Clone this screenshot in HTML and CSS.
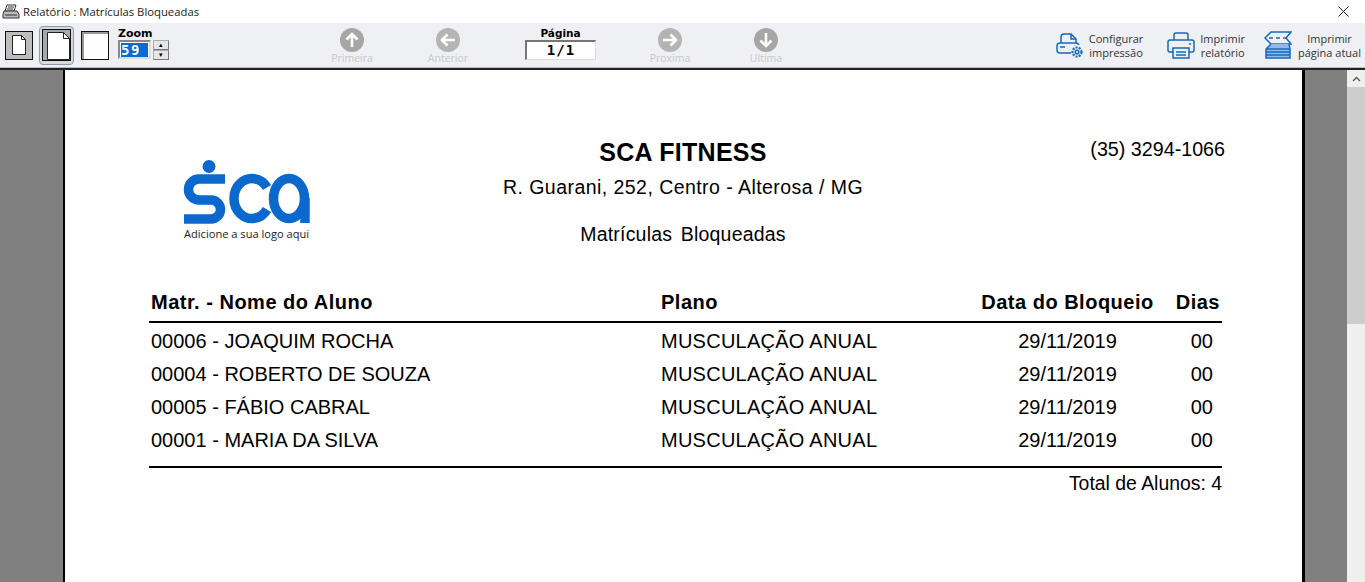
FILE: index.html
```html
<!DOCTYPE html>
<html lang="pt-BR">
<head>
    <meta charset="UTF-8">
    <title>Relatório : Matrículas Bloqueadas</title>
    <link rel="stylesheet" href="styles.css">
</head>
<body>
<div class="window">
    <div class="titlebar">
        <svg class="title-icon" width="18" height="16" viewBox="0 0 18 16">
            <path d="M5 1h9l-2 6H3z" fill="#fff" stroke="#333"/>
            <path d="M2 7h13l2 3v4H1v-4z" fill="#bbb" stroke="#333"/>
            <path d="M6 3h6M5 5h6M3 11h12" stroke="#333" fill="none"/>
        </svg>
        <span class="title-text">Relatório : Matrículas Bloqueadas</span>
        <svg class="close" width="11" height="11" viewBox="0 0 11 11"><path d="M.5.5l10 10M10.5.5l-10 10" stroke="#222" fill="none"/></svg>
    </div>

    <div class="toolbar">
        <div class="views">
            <div class="view view-down">
                <svg width="14" height="20" viewBox="0 0 14 20"><path d="M.5.5h9l4 4v15H.5z" fill="#fff" stroke="#222"/><path d="M9.5.5v4h4" fill="none" stroke="#222"/></svg>
            </div>
            <div class="view-wrap">
                <div class="view view-page">
                    <svg width="23" height="28" viewBox="0 0 23 28"><path d="M.5.5h16l6 6v21H.5z" fill="#fff" stroke="#222"/><path d="M16.5.5v6h6" fill="none" stroke="#222"/></svg>
                </div>
            </div>
            <div class="view view-blank"></div>
        </div>
        <div class="zoom">
            <div class="zoom-label">Zoom</div>
            <div class="zoom-row">
                <div class="zoom-input"><span class="zoom-value">59</span></div>
                <div class="spin">
                    <div class="spin-btn">▴</div>
                    <div class="spin-btn">▾</div>
                </div>
            </div>
        </div>

        <div class="nav">
            <div class="nav-btn first">
                <svg width="26" height="26" viewBox="0 0 26 26"><circle cx="13" cy="13" r="12" fill="#a6a6a6"/><path d="M13 20V7M7.500 12.500L13 7l5.500 5.500" stroke="#fff" stroke-width="2.600" fill="none"/></svg>
                <span>Primeira</span>
            </div>
            <div class="nav-btn prev">
                <svg width="26" height="26" viewBox="0 0 26 26"><circle cx="13" cy="13" r="12" fill="#b4b4b4"/><path d="M20 13H7M12.500 7.500L7 13l5.500 5.500" stroke="#fff" stroke-width="2.600" fill="none"/></svg>
                <span>Anterior</span>
            </div>
            <div class="page-box">
                <div class="page-label">Página</div>
                <div class="page-input">1/1</div>
            </div>
            <div class="nav-btn next">
                <svg width="26" height="26" viewBox="0 0 26 26"><circle cx="13" cy="13" r="12" fill="#b4b4b4"/><path d="M6 13h13M13.500 7.500L19 13l-5.500 5.500" stroke="#fff" stroke-width="2.600" fill="none"/></svg>
                <span>Proxima</span>
            </div>
            <div class="nav-btn last">
                <svg width="26" height="26" viewBox="0 0 26 26"><circle cx="13" cy="13" r="12" fill="#a6a6a6"/><path d="M13 6v13M7.500 13.500L13 19l5.500-5.500" stroke="#fff" stroke-width="2.600" fill="none"/></svg>
                <span>Ultima</span>
            </div>
        </div>

        <div class="actions">
            <div class="action action-config">
                <svg width="27" height="27" viewBox="0 0 27 27" fill="none" stroke="#1668bd" stroke-width="1.500">
                    <path d="M5 11V5q0-3 3-3h7l5 5v4"/>
                    <path d="M15 2v5h5"/>
                    <path d="M15 21H4q-3 0-3-3v-4q0-3 3-3h16q2 0 3 2"/>
                    <path d="M4 15h5"/>
                    <circle cx="21" cy="20" r="1.800"/>
                    <circle cx="21" cy="20" r="4.500" stroke-dasharray="2 1.200" stroke-width="2.200"/>
                </svg>
                <div class="action-text">Configurar<br>impressão</div>
            </div>
            <div class="action action-print">
                <svg width="28" height="27" viewBox="0 0 28 27" fill="none" stroke="#1668bd" stroke-width="1.500">
                    <path d="M7 8V3q0-2 2-2h10q2 0 2 2v5"/>
                    <path d="M6 20H3q-2 0-2-2v-8q0-2 2-2h22q2 0 2 2v8q0 2-2 2h-3"/>
                    <path d="M6 16h16v10H6z"/>
                    <path d="M9 20h10M9 23h10"/>
                    <path d="M22 12h2"/>
                </svg>
                <div class="action-text">Imprimir<br>relatório</div>
            </div>
            <div class="action action-current">
                <svg width="28" height="28" viewBox="0 0 28 28" fill="none" stroke="#1668bd" stroke-width="1.500">
                    <path d="M7 1h20l-5 6 5 6H7L1 7z"/>
                    <path d="M5 7h4M12 7h4M19 7h3"/>
                    <path d="M7 13l-5 5v9h24v-9l-1-5" fill="#8fbde9"/>
                    <path d="M2 18h24M2 21h24M2 24h24" stroke-width="1.700"/>
                </svg>
                <div class="action-text">Imprimir<br>página atual</div>
            </div>
        </div>
    </div>

    <div class="workspace">
        <div class="sheet">
            <div class="report-head">
                <div class="logo">
                    <svg class="logo-mark" width="128" height="66" viewBox="0 0 128 66" fill="none" stroke="#0b68cc" stroke-width="9.500">
                        <circle cx="26" cy="6.500" r="6.500" fill="#0b68cc" stroke="none"/>
                        <path d="M42 19H16a10.500 10.500 0 0 0 0 21H28a9.500 9.500 0 0 1 0 19H1"/>
                        <path d="M84 27.500A18 20 0 1 0 84 49.500"/>
                        <ellipse cx="106" cy="38.500" rx="15.500" ry="20"/>
                        <path d="M122 38v25"/>
                    </svg>
                    <div class="logo-caption">Adicione a sua logo aqui</div>
                </div>
                <div class="company">
                    <div class="company-name">SCA FITNESS</div>
                    <div class="company-addr">R. Guarani, 252, Centro - Alterosa / MG</div>
                    <div class="report-title">Matrículas Bloqueadas</div>
                </div>
                <div class="phone">(35) 3294-1066</div>
            </div>

            <div class="table">
                <div class="row head-row">
                    <div class="col-name">Matr. - Nome do Aluno</div>
                    <div class="col-plan">Plano</div>
                    <div class="col-date">Data do Bloqueio</div>
                    <div class="col-days">Dias</div>
                </div>
                <div class="rows">
                    <div class="row">
                        <div class="col-name">00006 - JOAQUIM ROCHA</div>
                        <div class="col-plan">MUSCULAÇÃO ANUAL</div>
                        <div class="col-date">29/11/2019</div>
                        <div class="col-days">00</div>
                    </div>
                    <div class="row">
                        <div class="col-name">00004 - ROBERTO DE SOUZA</div>
                        <div class="col-plan">MUSCULAÇÃO ANUAL</div>
                        <div class="col-date">29/11/2019</div>
                        <div class="col-days">00</div>
                    </div>
                    <div class="row">
                        <div class="col-name">00005 - FÁBIO CABRAL</div>
                        <div class="col-plan">MUSCULAÇÃO ANUAL</div>
                        <div class="col-date">29/11/2019</div>
                        <div class="col-days">00</div>
                    </div>
                    <div class="row">
                        <div class="col-name">00001 - MARIA DA SILVA</div>
                        <div class="col-plan">MUSCULAÇÃO ANUAL</div>
                        <div class="col-date">29/11/2019</div>
                        <div class="col-days">00</div>
                    </div>
                </div>
                <div class="total">Total de Alunos: 4</div>
            </div>
        </div>
        <div class="scrollbar">
            <div class="scroll-arrow">
                <svg width="9" height="6" viewBox="0 0 9 6"><path d="M1 5l3.500-3.500L8 5" fill="none" stroke="#555" stroke-width="1.300"/></svg>
            </div>
            <div class="scroll-thumb"></div>
        </div>
    </div>
</div>
</body>
</html>
```

FILE: styles.css
```css
*{
    margin: 0;
    padding: 0;
    box-sizing: border-box;
}
html, body{
    height: 100%;
    overflow: hidden;
}
body{
    font-family: "Liberation Sans", Arial, sans-serif;
    background: #fff;
    color: #000;
}
.window{
    height: 582px;
    display: flex;
    flex-direction: column;
}

/* title bar */
.titlebar{
    height: 23px;
    display: flex;
    align-items: center;
    padding: 0 16px 0 2px;
    background: #fff;
}
.title-icon{
    margin-right: 3px;
}
.title-text{
    font-family: "Open Sans", sans-serif;
    font-size: 11.3px;
    color: #222;
    flex: 1;
}

/* toolbar */
.toolbar{
    height: 45px;
    background: #eef0f3;
    display: flex;
    border-bottom: 1px solid #b9bcc0;
}
.views{
    display: flex;
    align-items: center;
    padding-left: 5px;
}
.view{
    border: 1px solid #111;
    width: 28px;
    height: 29px;
    display: flex;
    align-items: center;
    justify-content: center;
}
.view-down{
    background: #bdbdbd;
}
.view-wrap{
    margin-left: 6px;
    width: 35px;
    height: 39px;
    border: 1px solid #8f9aa6;
    border-radius: 4px;
    background: #d5dae0;
    display: flex;
    align-items: center;
    justify-content: center;
}
.view-page{
    width: 29px;
    height: 32px;
    background: #a8a8a8;
    align-items: flex-end;
    justify-content: flex-end;
}
.view-page svg{
    display: block;
}
.view-blank{
    margin-left: 7px;
    background: #fff;
    box-shadow: inset 2px 2px 0 #999;
}
.zoom{
    margin-left: 9px;
    padding-top: 5px;
}
.zoom-label{
    font-family: "DejaVu Sans", sans-serif;
    font-size: 11px;
    font-weight: bold;
    line-height: 12px;
    text-align: center;
    width: 32px;
}
.zoom-row{
    display: flex;
    gap: 1px;
}
.zoom-input{
    width: 33px;
    height: 19px;
    background: #fff;
    border: 2px solid #888;
    border-right-color: #ddd;
    border-bottom-color: #ddd;
    padding: 1px 0 0 1px;
}
.zoom-value{
    display: block;
    width: 27px;
    height: 14px;
    background: #0a6ad6;
    color: #fff;
    font-family: "DejaVu Sans Mono", monospace;
    font-size: 14px;
    font-weight: bold;
    line-height: 14px;
    letter-spacing: 1.500px;
}
.spin{
    display: flex;
    flex-direction: column;
    margin-left: 1px;
}
.spin-btn{
    width: 16px;
    height: 10px;
    background: #e6e6e6;
    border: 1px solid #aaa;
    border-right-color: #777;
    border-bottom-color: #777;
    font-size: 7px;
    line-height: 8px;
    text-align: center;
}

/* page navigation */
.nav{
    flex: 1;
    display: flex;
    margin-left: 153px;
}
.nav-btn{
    width: 60px;
    display: flex;
    flex-direction: column;
    align-items: center;
    padding-top: 4px;
}
.nav-btn span{
    font-family: "Open Sans", sans-serif;
    font-size: 10.5px;
    line-height: 14px;
    color: #c8c8c8;
    margin-top: -2px;
}
.prev{
    margin-left: 36px;
}
.page-box{
    margin-left: 47px;
    width: 71px;
    text-align: center;
}
.page-label{
    font-family: "DejaVu Sans", sans-serif;
    font-size: 10.5px;
    font-weight: bold;
    line-height: 12px;
    margin-top: 4px;
}
.page-input{
    height: 20px;
    background: #fff;
    border: 2px solid #777;
    border-right: 1px solid #ddd;
    border-bottom: 1px solid #ddd;
    font-family: "DejaVu Sans Mono", monospace;
    font-size: 14px;
    font-weight: bold;
    line-height: 17px;
    letter-spacing: 1px;
    margin-top: 1px;
}
.next{
    margin-left: 44px;
}
.last{
    margin-left: 36px;
}

/* print buttons */
.actions{
    display: flex;
    align-items: center;
    padding-right: 4px;
}
.action{
    display: flex;
    align-items: center;
}
.action-print{
    margin-left: 24px;
}
.action-current{
    margin-left: 19px;
}
.action svg{
    margin-right: 6px;
}
.action-print svg{
    margin-right: 5px;
}
.action-text{
    font-family: "Open Sans", sans-serif;
    font-size: 11px;
    line-height: 14px;
    color: #333;
    text-align: center;
    padding-top: 2px;
    white-space: nowrap;
}

/* report area */
.workspace{
    flex: 1;
    min-height: 0;
    background: #808080;
    border-top: 2px solid #222;
    display: flex;
    justify-content: space-between;
    overflow: hidden;
}
.sheet{
    width: 1242px;
    height: 700px;
    margin-left: 63px;
    background: #fff;
    border-left: 2px solid #000;
    border-right: 3px solid #000;
    padding: 0 81px 0 84px;
}
.scrollbar{
    width: 18px;
    background: #efefef;
}
.scroll-arrow{
    height: 17px;
    display: flex;
    align-items: center;
    justify-content: center;
}
.scroll-thumb{
    height: 237px;
    background: #cdcdcd;
}

.report-head{
    display: flex;
    height: 226px;
}
.logo{
    width: 126px;
    margin-left: 34px;
    padding-top: 90px;
}
.logo-mark{
    display: block;
}
.logo-caption{
    font-family: "Open Sans", sans-serif;
    font-size: 11.1px;
    line-height: 13px;
    color: #222;
    margin-top: 1px;
    padding-left: 1px;
    white-space: nowrap;
}
.company{
    text-align: center;
    width: 362px;
    margin-left: 193px;
    white-space: nowrap;
}
.company-name{
    font-size: 25px;
    font-weight: bold;
    line-height: 30px;
    letter-spacing: .3px;
    margin-top: 67px;
}
.company-addr{
    font-size: 19.5px;
    line-height: 22px;
    margin-top: 9px;
    letter-spacing: .45px;
}
.report-title{
    font-size: 19.5px;
    line-height: 22px;
    margin-top: 25px;
    word-spacing: 3px;
    letter-spacing: .2px;
}
.phone{
    flex: 1;
    text-align: right;
    font-size: 19.7px;
    line-height: 24px;
    padding-top: 67px;
    margin-right: -4px;
    white-space: nowrap;
}

.table{
    width: 1073px;
}
.row{
    display: flex;
    height: 33px;
    font-size: 20px;
    line-height: 33px;
    padding: 0 2px;
    white-space: nowrap;
}
.head-row{
    height: 27px;
    line-height: 12px;
    font-weight: bold;
    letter-spacing: .5px;
    border-bottom: 2px solid #000;
}
.rows{
    padding-top: 2px;
    padding-bottom: 9px;
    border-bottom: 2px solid #000;
}
.col-name{
    width: 510px;
}
.col-plan{
    width: 310px;
    letter-spacing: .25px;
}
.head-row .col-plan{
    letter-spacing: .5px;
}
.col-date{
    width: 193px;
    text-align: center;
}
.col-days{
    flex: 1;
    text-align: right;
}
.rows .col-days{
    padding-right: 7px;
}
.total{
    font-size: 19.4px;
    line-height: 22px;
    text-align: right;
    margin-top: 4px;
}
```
